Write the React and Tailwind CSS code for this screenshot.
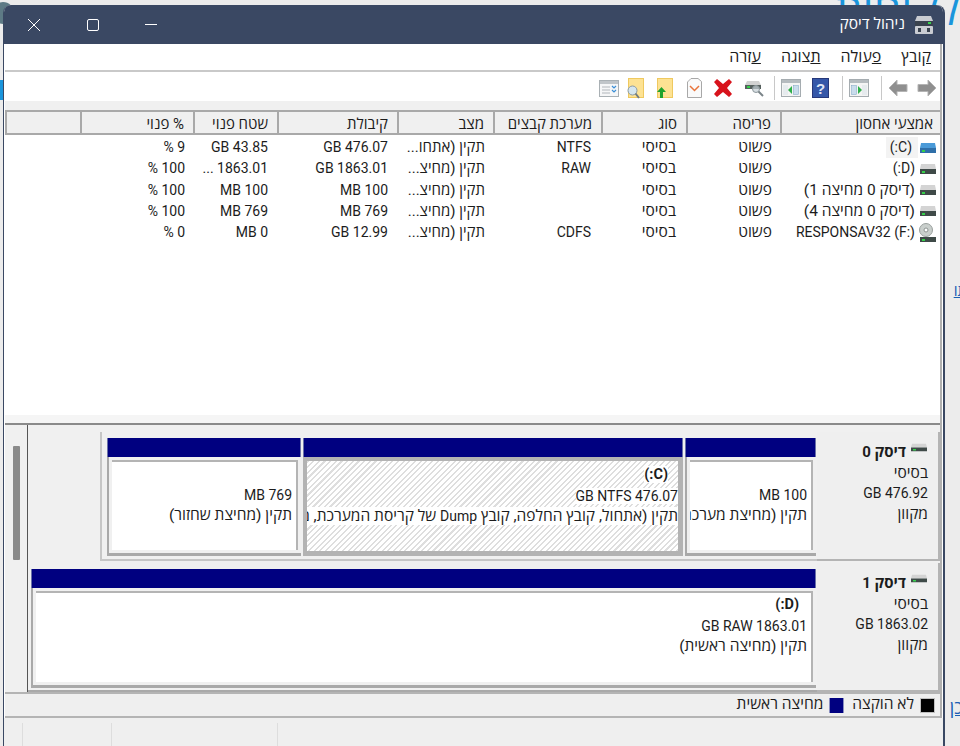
import React from 'react'

const columns = 'grid grid-cols-[160px_94px_85px_108px_96px_120px_84px_113px_75px]'

const headers = ['אמצעי אחסון', 'פריסה', 'סוג', 'מערכת קבצים', 'מצב', 'קיבולת', 'שטח פנוי', '% פנוי', '']

const rows = [
  { name: '(C:)', icon: 'blue', fs: 'NTFS', status: 'תקין (אתחו...', size: '476.07 GB', free: '43.85 GB', pct: '9 %' },
  { name: '(D:)', icon: 'drive', fs: 'RAW', status: 'תקין (מחיצ...', size: '1863.01 GB', free: '1863.01 ...', pct: '100 %' },
  { name: '(דיסק 0 מחיצה 1)', icon: 'drive', fs: '', status: 'תקין (מחיצ...', size: '100 MB', free: '100 MB', pct: '100 %' },
  { name: '(דיסק 0 מחיצה 4)', icon: 'drive', fs: '', status: 'תקין (מחיצ...', size: '769 MB', free: '769 MB', pct: '100 %' },
  { name: 'RESPONSAV32 (F:)', icon: 'cd', fs: 'CDFS', status: 'תקין (מחיצ...', size: '12.99 GB', free: '0 MB', pct: '0 %' },
]

// hebrew glyphs come out narrower than the latin ones, so the two get different sizes
const sizeOf = (text) => (typeof text === 'string' && !/[\u0590-\u05ff]/.test(text) ? 'text-[14px]' : 'text-[15.5px]')

const DriveIcon = ({ top = '#d4d4d4', body = '#3f4a48', height = 12 }) => (
  <svg width="18" height={height} viewBox="0 0 18 12" preserveAspectRatio="none">
    <path d="M2 1h14l1 5H1z" fill={top} />
    <rect x="1" y="6" width="16" height="5" fill={body} />
    <rect x="3" y="8" width="3" height="2" fill="#35d04a" />
  </svg>
)

const CdIcon = () => (
  <svg width="18" height="20" viewBox="0 0 18 20">
    <circle cx="7" cy="7" r="6.5" fill="#c9cfcc" stroke="#9aa09e" />
    <circle cx="7" cy="7" r="2" fill="#fff" stroke="#8d9492" />
    <rect x="1" y="14" width="16" height="5" fill="#3f4a48" />
    <rect x="3" y="16" width="3" height="2" fill="#35d04a" />
  </svg>
)

const TitleIcon = () => (
  <svg width="20" height="20" viewBox="0 0 20 20">
    <path d="M3 1h14l2 5H1z" fill="#c9ccd2" />
    <rect x="1" y="6" width="18" height="5" fill="#39424e" />
    <rect x="14" y="7" width="3" height="2" fill="#35d04a" />
    <rect x="1" y="11" width="18" height="8" rx="1" fill="#c9ccd2" />
    <rect x="4" y="13" width="3" height="4" fill="#39424e" />
    <rect x="13" y="13" width="3" height="4" fill="#39424e" />
  </svg>
)

const ArrowIcon = ({ flip }) => (
  <svg width="20" height="20" viewBox="0 0 20 20" className={flip ? '-scale-x-100' : ''}>
    <path d="M11 2l8 8-8 8v-4.500H1v-7h10z" fill="#8f8f8f" stroke="#b4b4b4" />
  </svg>
)

const PaneIcon = ({ flip }) => (
  <svg width="20" height="18" viewBox="0 0 20 18" className={flip ? '-scale-x-100' : ''}>
    <rect x="0.5" y="0.5" width="19" height="17" fill="#f4f4f4" stroke="#a5acb0" />
    <rect x="1" y="1" width="18" height="3" fill="#b5bbbf" />
    <rect x="2.500" y="6.500" width="5" height="9" fill="#c9dcec" stroke="#7ca3c4" strokeWidth="0.5" />
    <rect x="13" y="6" width="5" height="10" fill="#e6ebee" />
    <path d="M9 7l4 4-4 4z" fill="#2fae4b" />
  </svg>
)

const HelpIcon = () => (
  <svg width="17" height="20" viewBox="0 0 17 20">
    <rect x="0.5" y="0.5" width="16" height="19" fill="#3557a8" stroke="#26387a" />
    <text x="8.5" y="15.5" textAnchor="middle" fontSize="15" fontWeight="700" fill="#dfe6f5" fontFamily="Liberation Sans">?</text>
  </svg>
)

const MagnifierDrive = () => (
  <svg width="20" height="18" viewBox="0 0 20 18">
    <path d="M3 2h12l2 4H1z" fill="#d2d2d2" />
    <rect x="1" y="6" width="16" height="4" fill="#56605e" />
    <rect x="3" y="7" width="3" height="2" fill="#35d04a" />
    <circle cx="12" cy="10" r="3.5" fill="#c6d0d6" fillOpacity="0.7" stroke="#8c979c" />
    <path d="M14.5 12.5L19 17" stroke="#7a8488" strokeWidth="2" />
  </svg>
)

const RedX = () => (
  <svg width="18" height="18" viewBox="0 0 18 18">
    <path d="M0 3l3-3 6 5 6-5 3 3-5 6 5 6-3 3-6-5-6 5-3-3 5-6z" fill="#d8131c" />
  </svg>
)

const DocIcon = () => (
  <svg width="15" height="20" viewBox="0 0 15 20">
    <path d="M.5 4L4 .5h7l3.500 3v16H.5z" fill="#fafafa" stroke="#a8a8a8" />
    <path d="M3 8l4.500 4.500L12 8" fill="none" stroke="#e8743b" strokeWidth="1.500" />
  </svg>
)

const FolderUp = () => (
  <svg width="16" height="20" viewBox="0 0 16 20">
    <rect x="0.5" y="0.5" width="15" height="19" fill="#fde293" stroke="#efc95f" />
    <path d="M4.500 9l-4.500 5h3v6h3v-6h3z" fill="#1fa32c" />
  </svg>
)

const FolderSearch = () => (
  <svg width="18" height="21" viewBox="0 0 18 21">
    <rect x="1.500" y="0.500" width="15" height="19" fill="#fde293" stroke="#efc95f" />
    <circle cx="5.500" cy="12.500" r="4.500" fill="#d5e6ef" stroke="#8a9aa3" />
    <path d="M8.500 15.500L12 20" stroke="#727c80" strokeWidth="2" />
  </svg>
)

const ListIcon = () => (
  <svg width="20" height="17" viewBox="0 0 20 17">
    <rect x="0.500" y="0.500" width="19" height="16" fill="#f5f6f7" stroke="#a9b0b4" />
    <rect x="1" y="1" width="18" height="3" fill="#c0c5c9" />
    <path d="M3 7h8M3 10h8M3 13h8" stroke="#c7ccd0" strokeWidth="1.500" />
    <path d="M13 6l2 2 2-2M13 10l2 2 2-2" fill="none" stroke="#3c8fd6" strokeWidth="1.200" />
  </svg>
)

const Separator = () => <div className="h-[24px] w-px bg-[#c8c8c8]" />

const Toolbar = () => (
  <div className="flex h-[29px] shrink-0 items-center bg-white pr-[3px] pt-[3px]">
    <ArrowIcon />
    <div className="mr-[9px]"><ArrowIcon flip /></div>
    <div className="mr-[6px]"><Separator /></div>
    <div className="mr-[12px]"><PaneIcon /></div>
    <div className="mr-[6px]"><Separator /></div>
    <div className="mr-[13px]"><HelpIcon /></div>
    <div className="mr-[11px]"><PaneIcon flip /></div>
    <div className="mr-[6px]"><Separator /></div>
    <div className="mr-[10px]"><MagnifierDrive /></div>
    <div className="mr-[12px]"><RedX /></div>
    <div className="mr-[12px]"><DocIcon /></div>
    <div className="mr-[14px]"><FolderUp /></div>
    <div className="mr-[12px]"><FolderSearch /></div>
    <div className="mr-[8px]"><ListIcon /></div>
  </div>
)

const RowIcon = ({ type }) => {
  if (type === 'cd') return <CdIcon />
  if (type === 'blue') return <DriveIcon top="#4a9ad8" body="#2f6fa8" />
  return <DriveIcon />
}

const DiskTable = () => (
  <div className="flex h-[305px] shrink-0 flex-col bg-white">
    <div className={`${columns} h-[25px] border-y-2 border-[#a9a9a9] bg-[#f0f0f0]`}>
      {headers.map((h, i) => (
        <div key={i} className={`${i === 0 ? 'pr-[7px]' : 'pr-[9px]'} whitespace-nowrap border-l-2 border-[#a9a9a9] pt-[1px] text-[15px] leading-[22px]`}>{h}</div>
      ))}
    </div>
    <div className="flex flex-col pt-[2px]">
      {rows.map((r) => (
        <div key={r.name} className={`${columns} h-[21.250px] items-center leading-[21px]`}>
          <div className="flex items-center gap-[1px] pr-[3px]">
            <RowIcon type={r.icon} />
            <span className={`${sizeOf(r.name)} ${r.icon === 'blue' ? 'bg-[#f3f3f3] pl-[4px] pr-[6px]' : 'pr-[3px]'} whitespace-nowrap`}>{r.name}</span>
          </div>
          <div className="pr-[8px] text-[15.5px]">פשוט</div>
          <div className="pr-[10px] text-[15.5px]">בסיסי</div>
          <div className="pr-[10px] text-[14px]">{r.fs}</div>
          <div className="whitespace-nowrap pr-[8px] text-[15px]">{r.status}</div>
          <div className="pr-[9px] text-[14px]">{r.size}</div>
          <div className="whitespace-nowrap pr-[9px] text-[14px]">{r.free}</div>
          <div className="pr-[8px] text-[14px]">{r.pct}</div>
          <div />
        </div>
      ))}
    </div>
  </div>
)

const DiskLabel = ({ name, size }) => (
  <div className="flex w-[123px] shrink-0 flex-col border-b-2 border-r-2 border-[#b4b4b4] bg-[#efefef] pr-[10px] pt-[10px] leading-[20.500px]">
    <div className="flex items-center gap-[4px] text-[15px] font-bold">
      <div className="mb-[6px] mt-[-4px]"><DriveIcon height={9} /></div>
      <span>{name}</span>
    </div>
    <div className="text-[15.5px]">בסיסי</div>
    <div className="text-[14px]">{size}</div>
    <div className="text-[15.5px]">מקוון</div>
  </div>
)

const Partition = ({ width, lines, hatch, bold }) => (
  <div className={`flex flex-col ${width}`}>
    <div className="h-[19px] shrink-0 border-x border-[#6b72a8] bg-[#000080]" />
    {hatch ? (
      <div className="flex-1 overflow-hidden border-[4px] border-b-[5px] border-r-[5px] border-[#b3b3b3] bg-[repeating-linear-gradient(135deg,#dedede_0,#dedede_1.5px,#ffffff_1.5px,#ffffff_4px)]">
        <div className="whitespace-nowrap pt-[3px] leading-[20.500px]">
          <div className="pr-[10px]"><span className="bg-white text-[14.5px] font-bold">{lines[0]}</span></div>
          {lines.slice(1).map((l, i) => (
            <div key={i}><span className={`bg-white ${sizeOf(l)}`}>{l}</span></div>
          ))}
        </div>
      </div>
    ) : (
      <div className="flex min-h-0 flex-1 border-b-[3px] border-l-2 border-[#a9a9a9] bg-[#f0f0f0] p-[3px]">
        <div className="min-w-0 flex-1 overflow-hidden whitespace-nowrap border-r-2 border-t-2 border-[#b4b4b4] bg-white pr-[4px] pt-[2px] leading-[20.500px]">
          {lines.map((l, i) => (
            <div key={i} className={i === 0 && bold ? 'pr-[8px] text-[14.5px] font-bold' : sizeOf(l)}>{l}</div>
          ))}
        </div>
      </div>
    )}
  </div>
)

const BottomPane = () => (
  <div className="flex h-[267px] flex-col gap-[2px] bg-[#f0f0f0] pt-[7px]">
    <div className="flex h-[129px]">
      <DiskLabel name="דיסק 0" size="476.92 GB" />
      <div className="flex w-[717px] gap-[2px] border-b-2 border-l-2 border-[#c6c6c6] pb-[3px] pl-[5px] pr-[1px] pt-[6px]">
        <Partition width="w-[131px]" lines={['\u00a0', '100 MB', 'תקין (מחיצת מערכת, אתחול)']} />
        <Partition
          width="w-[380px]"
          hatch
          lines={[
            '(C:)',
            '476.07 GB NTFS',
            <>תקין (אתחול, קובץ החלפה, קובץ <span className="text-[14px]">Dump</span> של קריסת המערכת, מחיצה ראשית)</>,
          ]}
        />
        <Partition width="w-[194px]" lines={['\u00a0', '769 MB', 'תקין (מחיצת שחזור)']} />
      </div>
    </div>
    <div className="flex h-[129px]">
      <DiskLabel name="דיסק 1" size="1863.02 GB" />
      <div className="flex w-[789px] border-b-2 border-[#a9a9a9] pb-[2px] pl-[3px] pr-[1px] pt-[6px]">
        <Partition width="w-full" bold lines={['(D:)', '1863.01 GB RAW', 'תקין (מחיצה ראשית)']} />
      </div>
    </div>
  </div>
)

const Legend = () => (
  <div className="flex h-[26px] shrink-0 items-center gap-[6px] border-y-2 border-[#b4b4b4] bg-[#efefef] pr-[5px] text-[15.5px]">
    <div className="h-[15px] w-[15px] border border-[#c0c0c0] bg-black" />
    <span>לא הוקצה</span>
    <div className="mr-[2px] h-[15px] w-[15px] border-x border-[#8a8fc0] bg-[#000080]" />
    <span>מחיצה ראשית</span>
  </div>
)

const StatusBar = () => (
  <div className="flex flex-1 flex-row-reverse items-stretch bg-[#efefef] pt-[5px]">
    <div className="w-[19px] border-r border-[#dddddd]" />
    <div className="w-[89px] border-r border-[#dddddd]" />
    <div className="w-[166px] border-r border-[#dddddd]" />
    <div className="flex-1" />
  </div>
)

export default function App() {
  return (
    <div className="relative flex h-[746px] w-[960px] overflow-hidden bg-[#ececec] pl-[3px] pr-[15px] pt-[5px] font-['Roboto','Open_Sans','Liberation_Sans',sans-serif] text-[#1c1c1c]" dir="rtl">
      <div className="absolute right-0 top-[-20px] whitespace-nowrap text-[44px] leading-[60px] text-[#1a95dc]">לקוחות</div>
      <div className="absolute right-[-7px] top-[280px] text-[15px] text-[#1a5fb4] underline">תו</div>
      <div className="absolute right-[-3px] top-[694px] text-[18px] text-[#1a5fb4] underline">כן</div>
      <div className="absolute left-0 top-[80px] h-[20px] w-[4px] bg-[#1a95dc]" />
      <div className="absolute left-[-8px] top-[2px] h-[22px] w-[22px] rounded-full bg-[#5d7a85]" />

      <div className="relative flex flex-1 flex-col rounded-t-[8px] border-l border-r-2 border-[#3a4863] bg-[#f0f0f0]">
        <div className="flex h-[39px] shrink-0 items-center justify-between rounded-t-[7px] bg-[#3a4863] text-white">
          <div className="flex items-center gap-[9px] pr-[9px] text-[15.5px]">
            <TitleIcon />
            <span>ניהול דיסק</span>
          </div>
          <div className="flex items-center gap-[46px] pl-[23px]">
            <div className="mt-[-1px] h-px w-[12px] bg-white" />
            <div className="h-[12px] w-[12px] rounded-[2px] border border-white" />
            <svg width="14" height="14" viewBox="0 0 14 14" className="stroke-white">
              <path d="M1 1l12 12M13 1L1 13" strokeWidth="1" />
            </svg>
          </div>
        </div>

        <div className="flex shrink-0 flex-col bg-white pl-[1px] pr-[1px]">
          <div className="flex flex-col border-r-2 border-[#b0b0b0]">
            <div className="flex h-[28px] shrink-0 items-center gap-[20px] border-b-2 border-[#c9c9c9] bg-white pr-[9px] text-[16px]">
              <span><span className="underline">ק</span>ובץ</span>
              <span><span className="underline">פ</span>עולה</span>
              <span><span className="underline">ת</span>צוגה</span>
              <span><span className="underline">ע</span>זרה</span>
            </div>

            <Toolbar />
            <div className="h-[9px] shrink-0 bg-[#f0f0f0]" />
            <DiskTable />

            <div className="h-[10px] shrink-0 border-b-2 border-b-[#8a8a8a] bg-[#f5f5f5]" />

            <div className="relative shrink-0">
              <BottomPane />
              <div className="absolute bottom-0 left-[22px] top-0 w-px bg-[#555555]" />
              <div className="absolute left-[8px] top-[21px] h-[114px] w-[7px] rounded-[1px] bg-[#8a8a8a]" />
            </div>

            <Legend />
          </div>
        </div>
        <StatusBar />
      </div>
    </div>
  )
}
